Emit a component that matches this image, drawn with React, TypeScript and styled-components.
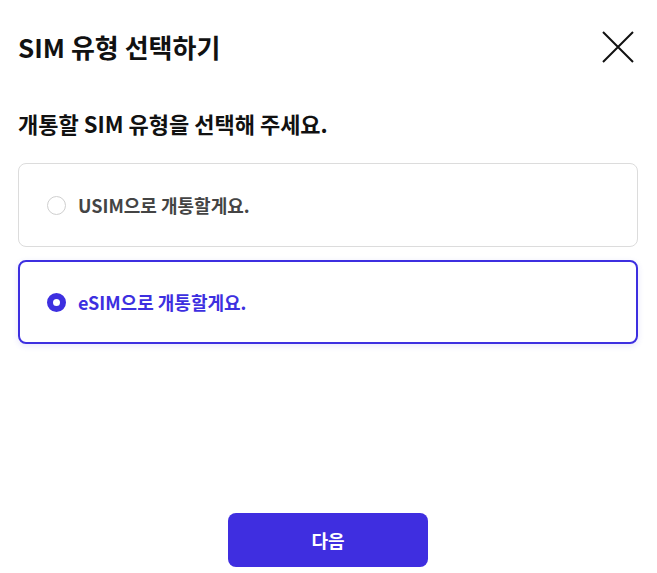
import { useState } from "react";
import styled, { createGlobalStyle } from "styled-components";

const GlobalStyle = createGlobalStyle`
  html, body { margin: 0; padding: 0; background: #fff; }
  body { font-family: "Noto Sans CJK KR", "Noto Sans", sans-serif; }
  * { box-sizing: border-box; }
`;

const Sheet = styled.div`
  display: flex;
  flex-direction: column;
  height: 573px;
  padding: 27px 19px 6px 18px;
`;

const Header = styled.div`
  display: flex;
  align-items: center;
  justify-content: space-between;
  padding-right: 3px;
`;

const Title = styled.h1`
  margin: 0;
  font-size: 26px;
  font-weight: 700;
  color: #111;
  line-height: 40px;
`;

const CloseButton = styled.button`
  border: 0;
  background: none;
  padding: 0;
  width: 34px;
  height: 34px;
  display: flex;
  align-items: center;
  justify-content: center;
  cursor: pointer;
`;

const Subtitle = styled.p`
  margin: 40px 0 0;
  font-size: 22px;
  font-weight: 700;
  color: #111;
  line-height: 32px;
`;

const Options = styled.div`
  display: flex;
  flex-direction: column;
  gap: 13px;
  margin-top: 24px;
`;

const Option = styled.label<{ $active: boolean }>`
  display: flex;
  align-items: center;
  gap: 12px;
  height: 84px;
  border-radius: 8px;
  border: ${p => (p.$active ? "2px solid #3d2fe0" : "1px solid #dcdcdc")};
  padding-left: ${p => (p.$active ? "27px" : "28px")};
  box-shadow: ${p => (p.$active ? "0 2px 6px rgba(61, 47, 224, 0.12)" : "none")};
  cursor: pointer;
`;

const Radio = styled.span<{ $active: boolean }>`
  width: 19px;
  height: 19px;
  border-radius: 50%;
  flex: none;
  border: ${p => (p.$active ? "6px solid #3d2fe0" : "1px solid #cfcfcf")};
  background: #fff;
`;

const OptionText = styled.span<{ $active: boolean }>`
  font-size: 18px;
  font-weight: 700;
  color: ${p => (p.$active ? "#3d2fe0" : "#444")};
`;

const Footer = styled.div`
  margin-top: auto;
  display: flex;
  justify-content: center;
`;

const NextButton = styled.button`
  width: 200px;
  height: 54px;
  border: 0;
  border-radius: 8px;
  background: #3f2ee0;
  color: #fff;
  font-family: inherit;
  font-size: 18px;
  font-weight: 700;
  cursor: pointer;
`;

const options = [
  { id: "usim", label: "USIM으로 개통할게요." },
  { id: "esim", label: "eSIM으로 개통할게요." },
];

export default function App() {
  const [selected, setSelected] = useState("esim");

  return (
    <>
      <GlobalStyle />
      <Sheet>
        <Header>
          <Title>SIM 유형 선택하기</Title>
          <CloseButton aria-label="닫기">
            <svg width="32" height="32" viewBox="0 0 32 32">
              <path d="M1 1 L31 31 M31 1 L1 31" stroke="#111" strokeWidth="2" />
            </svg>
          </CloseButton>
        </Header>
        <Subtitle>개통할 SIM 유형을 선택해 주세요.</Subtitle>
        <Options>
          {options.map(o => {
            const active = selected === o.id;
            return (
              <Option key={o.id} $active={active} onClick={() => setSelected(o.id)}>
                <Radio $active={active} />
                <OptionText $active={active}>{o.label}</OptionText>
              </Option>
            );
          })}
        </Options>
        <Footer>
          <NextButton>다음</NextButton>
        </Footer>
      </Sheet>
    </>
  );
}
